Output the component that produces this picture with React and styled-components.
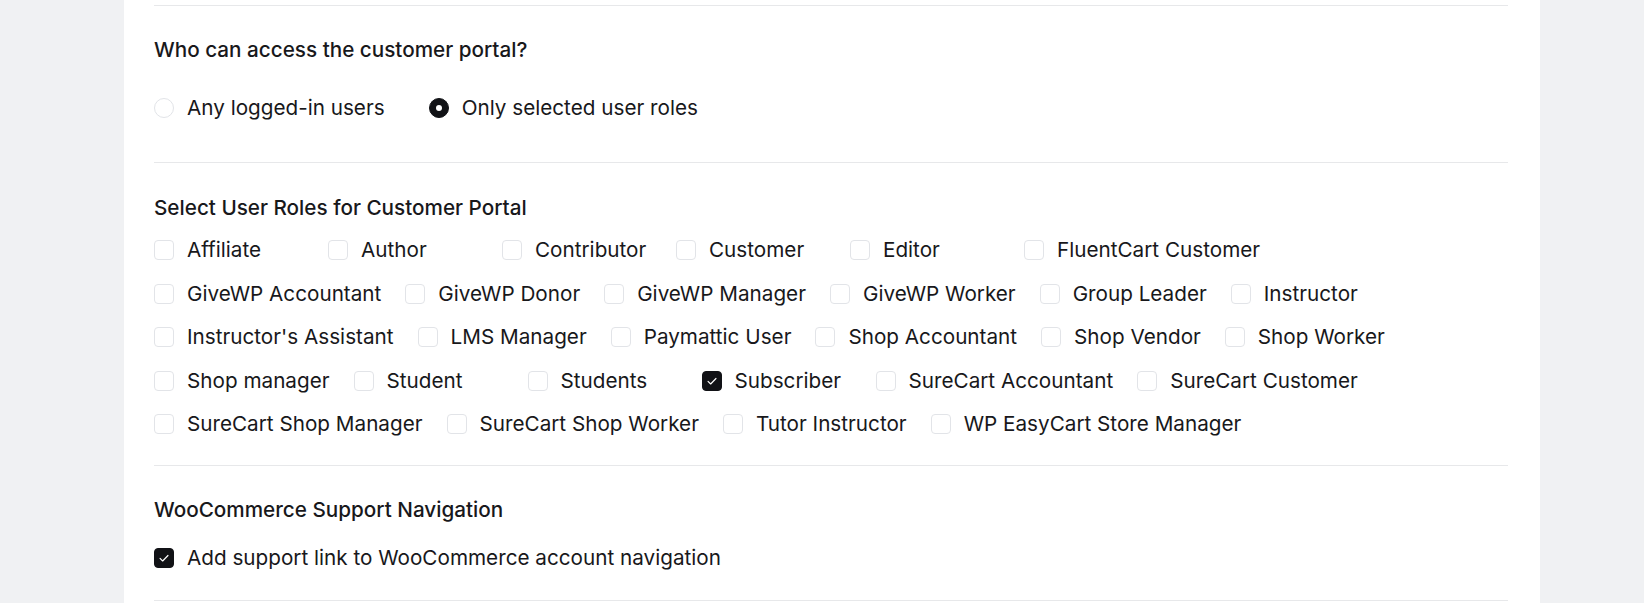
import React from "react";
import styled, { createGlobalStyle } from "styled-components";

const GlobalStyle = createGlobalStyle`
  html, body { margin: 0; padding: 0; background: #f0f1f3; }
  body { font-family: Inter, "Noto Sans", sans-serif; color: #18181b; }
  * { box-sizing: border-box; }
`;

const Page = styled.div`
  display: flex;
  padding-left: 124px;
  padding-right: 104px;
  min-height: 603px;
`;

const Panel = styled.div`
  flex: 1;
  background: #ffffff;
  padding: 5px 32px 0 30px;
`;

const Section = styled.section`
  border-top: 1px solid #e7e8ea;
  padding-top: ${(p) => p.$pt}px;
  padding-bottom: ${(p) => p.$pb}px;
`;

const Heading = styled.h3`
  margin: 0 0 ${(p) => p.$mb}px 0;
  font-size: 20.7px;
  line-height: 30px;
  font-weight: 500;
  color: #18181b;
`;

const RadioRow = styled.div`
  display: flex;
  align-items: center;
  gap: 44px;
`;

const Option = styled.label`
  display: flex;
  align-items: center;
  gap: 13px;
  font-size: 20.7px;
  line-height: 30px;
  font-weight: 400;
  color: #18181b;
  min-width: ${(p) => p.$min || 0}px;
  white-space: nowrap;
`;

const RadioDot = styled.span`
  width: 20px;
  height: 20px;
  border-radius: 50%;
  flex: none;
  display: flex;
  align-items: center;
  justify-content: center;
  border: 1px solid ${(p) => (p.$on ? "#111216" : "#e2e4e8")};
  background: ${(p) => (p.$on ? "#111216" : "#ffffff")};
  &::after {
    content: "";
    display: ${(p) => (p.$on ? "block" : "none")};
    width: 6px;
    height: 6px;
    border-radius: 50%;
    background: #ffffff;
  }
`;

const Box = styled.span`
  width: 20px;
  height: 20px;
  border-radius: 4px;
  flex: none;
  display: flex;
  align-items: center;
  justify-content: center;
  border: 1px solid ${(p) => (p.$on ? "#111216" : "#e2e4e8")};
  background: ${(p) => (p.$on ? "#111216" : "#ffffff")};
`;

const Grid = styled.div`
  display: flex;
  flex-wrap: wrap;
  column-gap: 24px;
  row-gap: 13.5px;
`;

const Check = () => (
  <svg width="20" height="20" viewBox="0 0 20 20" fill="none">
    <path d="M5.6 10.4 L8.5 13.3 L14.4 7.2" stroke="#ffffff" strokeWidth="1.3" strokeLinecap="round" strokeLinejoin="round" />
  </svg>
);

const Checkbox = ({ label, on, min }) => (
  <Option $min={min}>
    <Box $on={on}>{on && <Check />}</Box>
    {label}
  </Option>
);

const Radio = ({ label, on }) => (
  <Option>
    <RadioDot $on={on} />
    {label}
  </Option>
);

const roles = [
  "Affiliate",
  "Author",
  "Contributor",
  "Customer",
  "Editor",
  "FluentCart Customer",
  "GiveWP Accountant",
  "GiveWP Donor",
  "GiveWP Manager",
  "GiveWP Worker",
  "Group Leader",
  "Instructor",
  "Instructor's Assistant",
  "LMS Manager",
  "Paymattic User",
  "Shop Accountant",
  "Shop Vendor",
  "Shop Worker",
  "Shop manager",
  "Student",
  "Students",
  "Subscriber",
  "SureCart Accountant",
  "SureCart Customer",
  "SureCart Shop Manager",
  "SureCart Shop Worker",
  "Tutor Instructor",
  "WP EasyCart Store Manager",
];

const selected = new Set(["Subscriber"]);

export default function App() {
  return (
    <>
      <GlobalStyle />
      <Page>
        <Panel>
          <Section $pt={29} $pb={39}>
            <Heading $mb={28}>Who can access the customer portal?</Heading>
            <RadioRow>
              <Radio label="Any logged-in users" />
              <Radio label="Only selected user roles" on />
            </RadioRow>
          </Section>
          <Section $pt={30} $pb={26}>
            <Heading $mb={12}>Select User Roles for Customer Portal</Heading>
            <Grid>
              {roles.map((r) => (
                <Checkbox key={r} label={r} on={selected.has(r)} min={150} />
              ))}
            </Grid>
          </Section>
          <Section $pt={29} $pb={27}>
            <Heading $mb={18}>WooCommerce Support Navigation</Heading>
            <Checkbox label="Add support link to WooCommerce account navigation" on />
          </Section>
          <Section $pt={0} $pb={0} />
        </Panel>
      </Page>
    </>
  );
}
